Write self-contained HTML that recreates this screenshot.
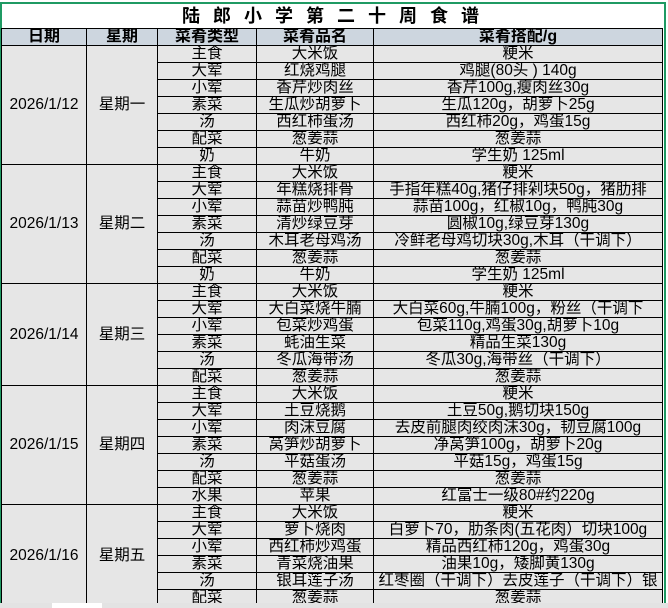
<!DOCTYPE html><html><head><meta charset="utf-8"><style>
body{margin:0;width:668px;height:608px;overflow:hidden;background:#fff;position:relative;font-family:"Liberation Sans","Noto Sans CJK SC",sans-serif;}
.g{position:absolute;background:#1f9a63}
table{position:absolute;left:1px;top:4px;border-collapse:collapse;table-layout:fixed;width:661px}
td{border:1px solid #000;height:16px;max-height:16px;padding:0;font-size:15.5px;line-height:16px;text-align:center;white-space:nowrap;overflow:hidden;background:#e6e6e6;color:#000}
tr.t td{height:24px;background:#fff;font-weight:bold;font-size:18px;letter-spacing:13px;border-top:none;border-left:none;border-right:none;padding-left:10px}
tr.h td{background:#cdd6df;font-weight:bold;font-size:16px}
.bot{position:absolute;left:0;top:603px;width:668px;height:5px;background:#e3e3e3}
.tab{position:absolute;left:52px;top:603px;width:50px;height:5px;background:#fff}
</style></head><body>
<div class="g" style="left:0;top:2px;width:666px;height:2px"></div>
<div class="g" style="left:0;top:2px;width:2px;height:601px"></div>
<div class="g" style="left:664px;top:2px;width:2px;height:601px"></div>
<table>
<colgroup><col style="width:85px"><col style="width:71px"><col style="width:99px"><col style="width:117px"><col style="width:289px"></colgroup>
<tr class="t"><td colspan="5">陆郎小学第二十周食谱</td></tr>
<tr class="h"><td>日期</td><td>星期</td><td>菜肴类型</td><td>菜肴品名</td><td>菜肴搭配/g</td></tr>
<tr><td rowspan="7">2026/1/12</td><td rowspan="7">星期一</td><td>主食</td><td>大米饭</td><td>粳米</td></tr>
<tr><td>大荤</td><td>红烧鸡腿</td><td>鸡腿(80头 ) 140g</td></tr>
<tr><td>小荤</td><td>香芹炒肉丝</td><td>香芹100g,瘦肉丝30g</td></tr>
<tr><td>素菜</td><td>生瓜炒胡萝卜</td><td>生瓜120g，胡萝卜25g</td></tr>
<tr><td>汤</td><td>西红柿蛋汤</td><td>西红柿20g，鸡蛋15g</td></tr>
<tr><td>配菜</td><td>葱姜蒜</td><td>葱姜蒜</td></tr>
<tr><td>奶</td><td>牛奶</td><td>学生奶 125ml</td></tr>
<tr><td rowspan="7">2026/1/13</td><td rowspan="7">星期二</td><td>主食</td><td>大米饭</td><td>粳米</td></tr>
<tr><td>大荤</td><td>年糕烧排骨</td><td>手指年糕40g,猪仔排剁块50g，猪肋排</td></tr>
<tr><td>小荤</td><td>蒜苗炒鸭肫</td><td>蒜苗100g，红椒10g，鸭肫30g</td></tr>
<tr><td>素菜</td><td>清炒绿豆芽</td><td>圆椒10g,绿豆芽130g</td></tr>
<tr><td>汤</td><td>木耳老母鸡汤</td><td>冷鲜老母鸡切块30g,木耳（干调下）</td></tr>
<tr><td>配菜</td><td>葱姜蒜</td><td>葱姜蒜</td></tr>
<tr><td>奶</td><td>牛奶</td><td>学生奶 125ml</td></tr>
<tr><td rowspan="6">2026/1/14</td><td rowspan="6">星期三</td><td>主食</td><td>大米饭</td><td>粳米</td></tr>
<tr><td>大荤</td><td>大白菜烧牛腩</td><td>大白菜60g,牛腩100g，粉丝（干调下</td></tr>
<tr><td>小荤</td><td>包菜炒鸡蛋</td><td>包菜110g,鸡蛋30g,胡萝卜10g</td></tr>
<tr><td>素菜</td><td>蚝油生菜</td><td>精品生菜130g</td></tr>
<tr><td>汤</td><td>冬瓜海带汤</td><td>冬瓜30g,海带丝（干调下）</td></tr>
<tr><td>配菜</td><td>葱姜蒜</td><td>葱姜蒜</td></tr>
<tr><td rowspan="7">2026/1/15</td><td rowspan="7">星期四</td><td>主食</td><td>大米饭</td><td>粳米</td></tr>
<tr><td>大荤</td><td>土豆烧鹅</td><td>土豆50g,鹅切块150g</td></tr>
<tr><td>小荤</td><td>肉沫豆腐</td><td>去皮前腿肉绞肉沫30g，韧豆腐100g</td></tr>
<tr><td>素菜</td><td>莴笋炒胡萝卜</td><td>净莴笋100g，胡萝卜20g</td></tr>
<tr><td>汤</td><td>平菇蛋汤</td><td>平菇15g，鸡蛋15g</td></tr>
<tr><td>配菜</td><td>葱姜蒜</td><td>葱姜蒜</td></tr>
<tr><td>水果</td><td>苹果</td><td>红富士一级80#约220g</td></tr>
<tr><td rowspan="6">2026/1/16</td><td rowspan="6">星期五</td><td>主食</td><td>大米饭</td><td>粳米</td></tr>
<tr><td>大荤</td><td>萝卜烧肉</td><td>白萝卜70，肋条肉(五花肉）切块100g</td></tr>
<tr><td>小荤</td><td>西红柿炒鸡蛋</td><td>精品西红柿120g，鸡蛋30g</td></tr>
<tr><td>素菜</td><td>青菜烧油果</td><td>油果10g，矮脚黄130g</td></tr>
<tr><td>汤</td><td>银耳莲子汤</td><td>红枣圈（干调下）去皮莲子（干调下）银</td></tr>
<tr><td>配菜</td><td>葱姜蒜</td><td>葱姜蒜</td></tr>
</table>
<div class="bot"></div><div class="tab"></div>
</body></html>
